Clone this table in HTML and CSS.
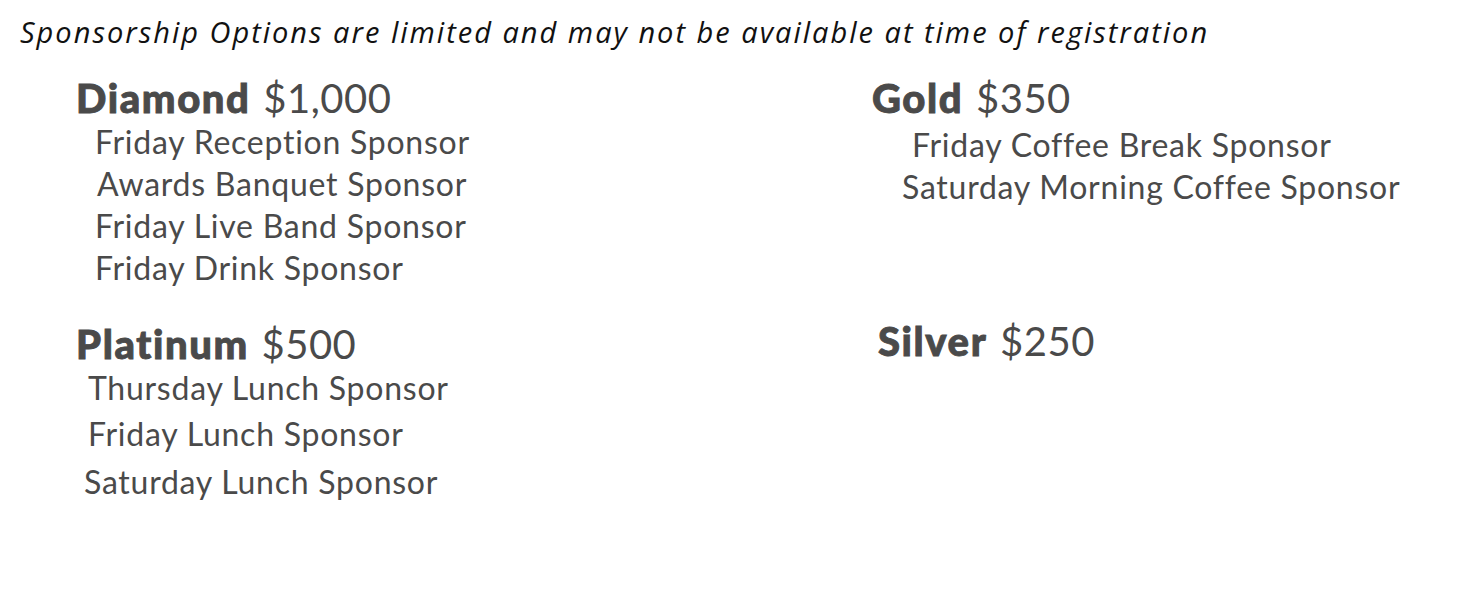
FILE: index.html
```html
<!DOCTYPE html>
<html>
<head>
<meta charset="utf-8">
<link rel="stylesheet" href="styles.css">
</head>
<body>
<div class="page">
  <p class="note">Sponsorship Options are limited and may not be available at time of registration</p>
  <div class="tiers">
    <section class="tier">
      <h2 class="tier-title"><b>Diamond</b> $1,000</h2>
      <ul class="items">
        <li>Friday Reception Sponsor</li>
        <li class="shift-r">Awards Banquet Sponsor</li>
        <li>Friday Live Band Sponsor</li>
        <li>Friday Drink Sponsor</li>
      </ul>
    </section>
    <section class="tier tier-right">
      <h2 class="tier-title"><b>Gold</b> $350</h2>
      <ul class="items items-gold">
        <li class="shift-gold">Friday Coffee Break Sponsor</li>
        <li>Saturday Morning Coffee Sponsor</li>
      </ul>
    </section>
    <section class="tier tier-low">
      <h2 class="tier-title plat"><b>Platinum</b> $500</h2>
      <ul class="items items-plat">
        <li>Thursday Lunch Sponsor</li>
        <li>Friday Lunch Sponsor</li>
        <li class="shift-l">Saturday Lunch Sponsor</li>
      </ul>
    </section>
    <section class="tier tier-right tier-low">
      <h2 class="tier-title silver"><b>Silver</b> $250</h2>
    </section>
  </div>
</div>
</body>
</html>
```

FILE: styles.css
```css
* { box-sizing: border-box; }
html, body { margin: 0; padding: 0; background: #ffffff; }
.page {
  width: 1480px;
  height: 600px;
  padding: 12px 0 0 20px;
  font-family: Lato, "Noto Sans", sans-serif;
  color: #4a4a4a;
}
.note {
  margin: 0;
  font-family: "Open Sans", "Noto Sans", sans-serif;
  font-style: italic;
  font-size: 29px;
  line-height: 40px;
  color: #111111;
  letter-spacing: 2px;
}
.tiers {
  display: grid;
  grid-template-columns: 796px 1fr;
  grid-template-rows: 240px auto;
  margin-top: 24px;
  padding-left: 56px;
}
.tier-title {
  margin: 0;
  font-size: 40px;
  line-height: 44px;
  font-weight: 400;
  letter-spacing: 0.5px;
  word-spacing: 2px;
}
.tier-title b {
  font-weight: 900;
  letter-spacing: 1.6px;
  -webkit-text-stroke: 0.9px #4a4a4a;
}
.items {
  list-style: none;
  margin: 1px 0 0;
  padding: 0 0 0 19px;
  font-size: 32px;
  line-height: 42px;
  letter-spacing: 0.75px;
}
.items li { white-space: nowrap; }
.shift-r { padding-left: 2px; }
.items-gold { padding-left: 30px; margin-top: 4px; }
.shift-gold { padding-left: 10px; }
.plat { margin-top: 6px; }
.items-plat { padding-left: 12px; line-height: 46px; margin-top: -1px; }
.shift-l { margin-left: -4px; padding-top: 2px; }
.silver { margin-left: 6px; margin-top: 3px; }
.gold-price { letter-spacing: 0; }
```
